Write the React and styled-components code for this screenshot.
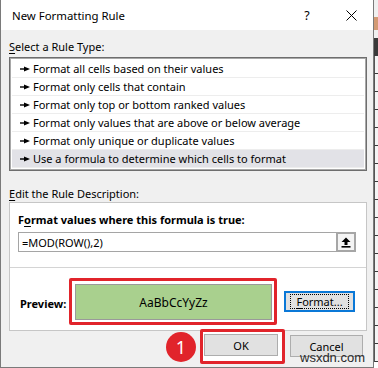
import React from "react";
import styled, { createGlobalStyle } from "styled-components";

const GlobalStyle = createGlobalStyle`
  html, body {
    margin: 0;
    padding: 0;
    background: #fff;
  }
  body {
    font-family: "Noto Sans", "Segoe UI", sans-serif;
    font-size: 11px;
    color: #000;
  }
`;

const Page = styled.div`
  position: relative;
  display: flex;
  width: 378px;
  height: 368px;
  overflow: hidden;
`;

const Dialog = styled.div`
  width: 374px;
  height: 368px;
  box-sizing: border-box;
  border: 1px solid #7a7a7a;
  border-top: none;
  background: #f0f0f0;
  display: flex;
  flex-direction: column;
`;

const TitleBar = styled.div`
  height: 30px;
  background: #fff;
  display: flex;
  align-items: center;
  padding-left: 11px;
  font-size: 11.4px;
`;

const Title = styled.div`
  flex: 1;
`;

const TitleButton = styled.div`
  width: 44px;
  display: flex;
  justify-content: center;
  font-size: 12.5px;
`;

const Body = styled.div`
  padding: 9px 6px 0 8px;
  display: flex;
  flex-direction: column;
`;

const Label = styled.div`
  height: 16px;
  line-height: 16px;
  margin-top: ${(p) => p.$top || 0}px;
  u {
    text-decoration: underline;
    text-underline-offset: 2px;
  }
`;

const ListBox = styled.div`
  margin-top: 2px;
  border: 1px solid #6e6e6e;
  box-shadow: inset 0 0 0 1px #a8a8a8;
  background: #fff;
  padding: 2px;
`;

const Row = styled.div`
  height: 18px;
  box-sizing: border-box;
  border-bottom: 1px solid #ededed;
  display: flex;
  align-items: center;
  gap: 3px;
  padding-left: 8px;
  background: ${(p) => (p.$selected ? "#e2e2e7" : "#fff")};
`;

const DescBox = styled.div`
  margin-top: 0;
  border: 1px solid #c6c6c6;
  background: #fff;
  display: flex;
  flex-direction: column;
`;

const Upper = styled.div`
  height: 65px;
  box-sizing: border-box;
  border-bottom: 1px solid #d4d4d4;
  padding: 9px 10px 0 8px;
`;

const Bold = styled.div`
  font-weight: bold;
  height: 16px;
  line-height: 16px;
  u {
    text-underline-offset: 2px;
  }
`;

const Input = styled.div`
  margin-top: 4px;
  height: 20px;
  box-sizing: border-box;
  border: 1px solid #a5a5a5;
  display: flex;
  align-items: center;
  padding-left: 3px;
`;

const InputText = styled.div`
  flex: 1;
`;

const CollapseButton = styled.div`
  width: 20px;
  height: 20px;
  margin: -1px -1px -1px 0;
  box-sizing: border-box;
  border: 2px solid #a6a6a6;
  background: #f4f4f4;
  display: flex;
  align-items: center;
  justify-content: center;
`;

const Lower = styled.div`
  height: 62px;
  box-sizing: border-box;
  padding: 10px 0 0 10px;
  display: flex;
  align-items: flex-start;
`;

const PreviewLabel = styled(Bold)`
  margin-top: 18px;
  width: 49px;
`;

const Highlight = styled.div`
  border: 3px solid #e1242b;
  border-radius: 2px;
  padding: ${(p) => p.$pad};
  background: #fff;
`;

const Swatch = styled.div`
  width: 195px;
  height: 34px;
  border: 1px solid #9a9a9a;
  background: #a9d08e;
  display: flex;
  align-items: center;
  justify-content: center;
  font-size: 12px;
`;

const Button = styled.div`
  width: ${(p) => p.$w}px;
  height: ${(p) => p.$h}px;
  box-sizing: border-box;
  border: ${(p) => (p.$focus ? "2px solid #0a78d7" : "1px solid #adadad")};
  background: #e1e1e1;
  display: flex;
  align-items: center;
  justify-content: center;
  margin-top: ${(p) => p.$top || 0}px;
  margin-left: ${(p) => p.$left || 0}px;
  u {
    text-underline-offset: 2px;
  }
`;

const FocusRing = styled.div`
  border: 1px dotted #000;
  padding: 0 5px;
  height: 13px;
  line-height: 13px;
`;

const ButtonRow = styled.div`
  margin-top: -2px;
  display: flex;
  justify-content: flex-end;
  align-items: flex-start;
  padding-right: 4px;
  gap: 5px;
`;

const Badge = styled.div`
  position: absolute;
  left: 166px;
  top: 332px;
  width: 30px;
  height: 30px;
  border-radius: 50%;
  background: #e1242b;
  color: #fff;
  font-size: 18px;
  display: flex;
  align-items: center;
  justify-content: center;
`;

const Watermark = styled.div`
  position: absolute;
  left: 300px;
  top: 350px;
  font-family: "Liberation Sans", Arial, sans-serif;
  font-size: 13px;
  color: #2a2a2a;
`;

const Sheet = styled.div`
  width: 4px;
  display: flex;
  flex-direction: column;
  background: #fff;
`;

const SheetCell = styled.div`
  height: ${(p) => p.$h}px;
  background: ${(p) => p.$bg};
  border-bottom: ${(p) => (p.$line ? "1px solid #3a3a3a" : "none")};
  border-left: ${(p) => (p.$line ? "1px solid #555" : "none")};
  box-sizing: border-box;
`;

const Pointer = () => (
  <svg width="10" height="6" viewBox="0 0 10 6">
    <line x1="0" y1="3" x2="5" y2="3" stroke="#000" strokeWidth="1.4" />
    <polygon points="4,0.5 10,3 4,5.5" fill="#000" />
  </svg>
);

const rules = [
  "Format all cells based on their values",
  "Format only cells that contain",
  "Format only top or bottom ranked values",
  "Format only values that are above or below average",
  "Format only unique or duplicate values",
  "Use a formula to determine which cells to format",
];

const sheetRows = [
  { h: 17, bg: "#f0f0f0" },
  { h: 13, bg: "#d39a74" },
  { h: 8, bg: "#f0f0f0" },
  { h: 18, bg: "#3a3a3a" },
  ...Array.from({ length: 17 }, () => ({ h: 18, bg: "#f4f4f4", line: true })),
];

export default function App() {
  return (
    <Page>
      <GlobalStyle />
      <Dialog>
        <TitleBar>
          <Title>New Formatting Rule</Title>
          <TitleButton>?</TitleButton>
          <TitleButton>
            <svg width="11" height="11" viewBox="0 0 11 11">
              <path d="M0.5 0.5 L10.5 10.5 M10.5 0.5 L0.5 10.5" stroke="#000" strokeWidth="1" />
            </svg>
          </TitleButton>
        </TitleBar>
        <Body>
          <Label>
            <u>S</u>elect a Rule Type:
          </Label>
          <ListBox>
            {rules.map((r, i) => (
              <Row key={r} $selected={i === rules.length - 1}>
                <Pointer />
                {r}
              </Row>
            ))}
          </ListBox>
          <Label $top={15}>
            <u>E</u>dit the Rule Description:
          </Label>
          <DescBox>
            <Upper>
              <Bold>
                F<u>o</u>rmat values where this formula is true:
              </Bold>
              <Input>
                <InputText>=MOD(ROW(),2)</InputText>
                <CollapseButton>
                  <svg width="10" height="11" viewBox="0 0 10 11">
                    <path d="M5 0.5 L9.5 5 L6.5 5 L6.5 8 L3.5 8 L3.5 5 L0.5 5 Z" fill="#000" />
                    <rect x="0.5" y="9" width="9" height="1.6" fill="#000" />
                  </svg>
                </CollapseButton>
              </Input>
            </Upper>
            <Lower>
              <PreviewLabel>Preview:</PreviewLabel>
              <Highlight $pad="3px 2px 2px 3px">
                <Swatch>AaBbCcYyZz</Swatch>
              </Highlight>
              <Button $w={71} $h={21} $focus $top={13} $left={7}>
                <FocusRing>
                  <u>F</u>ormat...
                </FocusRing>
              </Button>
            </Lower>
          </DescBox>
          <ButtonRow>
            <Highlight $pad="2px 4px 5px 1px">
              <Button $w={74} $h={22}>OK</Button>
            </Highlight>
            <Button $w={73} $h={22} $top={6}>Cancel</Button>
          </ButtonRow>
        </Body>
      </Dialog>
      <Sheet>
        {sheetRows.map((c, i) => (
          <SheetCell key={i} $h={c.h} $bg={c.bg} $line={c.line} />
        ))}
      </Sheet>
      <Badge>1</Badge>
      <Watermark>wsxdn.com</Watermark>
    </Page>
  );
}
